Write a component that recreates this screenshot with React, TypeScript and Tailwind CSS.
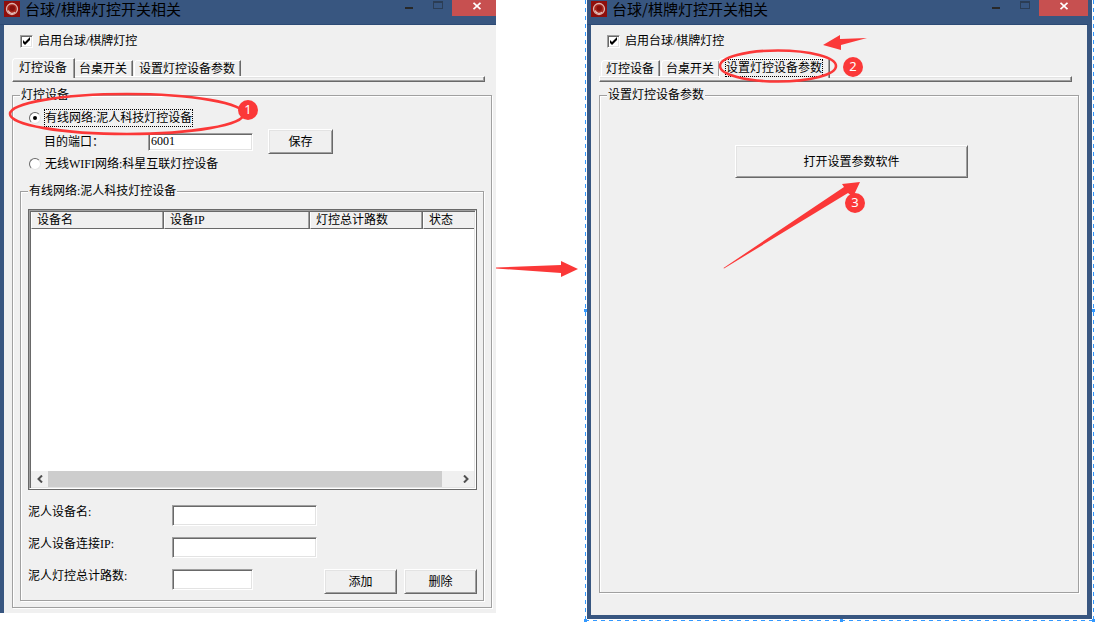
import type { ReactNode } from "react";
import clsx from "clsx";

const tabs = ["灯控设备", "台桌开关", "设置灯控设备参数"];

const columns = [
  { name: "设备名", width: "w-[30%]" },
  { name: "设备IP", width: "w-[33%]" },
  { name: "灯控总计路数", width: "w-[25.5%]" },
  { name: "状态", width: "w-[11.5%]" },
];

const sunken =
  "border border-t-[#a0a0a0] border-l-[#a0a0a0] border-r-white border-b-white shadow-[inset_1px_1px_0_#696969,inset_-1px_-1px_0_#e3e3e3]";

function AppIcon() {
  return (
    <svg viewBox="0 0 16 16" className="mt-px size-4 shrink-0">
      <rect width="16" height="16" fill="#8f0f0c" />
      <circle cx="8" cy="8" r="5.5" fill="#a8261c" stroke="#dfb3ad" strokeWidth="1.3" />
      <path d="M4.2 9.5a4 4 0 0 0 6.8 1.5" fill="none" stroke="#e8cbc6" strokeWidth="1.1" />
      <circle cx="8.3" cy="7.2" r="2.7" fill="#86100c" />
    </svg>
  );
}

function TitleBar({ closeClass }: { closeClass: string }) {
  return (
    <header className="flex h-[25px] items-start border-b border-[#2c4a75] bg-[#385680] pl-1">
      <AppIcon />
      <h1 className="ml-[5px] font-['Noto_Sans_CJK_SC',sans-serif] text-[15px] leading-[18px] whitespace-nowrap text-black">
        台球/棋牌灯控开关相关
      </h1>
      <div className="ml-auto flex h-4">
        <button aria-label="最小化" className="flex w-[29px] justify-center pt-[7px]">
          <span className="h-0.5 w-2 bg-[#282828]" />
        </button>
        <button aria-label="最大化" className="flex w-[29px] justify-center pt-px">
          <span className="h-2 w-2.5 border border-t-2 border-[#2b3d55]" />
        </button>
        <button aria-label="关闭" className={clsx("bg-[#c75050] pl-[21px]", closeClass)}>
          <svg viewBox="0 0 8 8" className="-mt-1 size-2">
            <path d="M.5.8 7.5 7.2M7.5.8.5 7.2" stroke="#fff" strokeWidth="1.8" />
          </svg>
        </button>
      </div>
    </header>
  );
}

function EnableCheck() {
  return (
    <label className="ml-2 flex h-4 w-fit items-center gap-[5px]">
      <span className="grid size-[13px]">
        <input
          type="checkbox"
          defaultChecked
          className={clsx("peer col-start-1 row-start-1 size-[13px] appearance-none bg-white", sunken)}
        />
        <svg
          viewBox="0 0 13 13"
          className="pointer-events-none invisible col-start-1 row-start-1 size-[13px] peer-checked:visible"
        >
          <path d="M3 5v3l2 2 5-5V2L5 7z" fill="#000" />
        </svg>
      </span>
      <span className="leading-4">启用台球/棋牌灯控</span>
    </label>
  );
}

function Tabs({ active, focused }: { active: number; focused?: boolean }) {
  return (
    <nav className="mt-[9px] mr-[7px]">
      <div role="tablist" className="flex h-[18px] items-end gap-px pl-0.5">
        {tabs.map((tab, i) => (
          <button
            key={tab}
            role="tab"
            aria-selected={i === active}
            className={clsx(
              "rounded-tl-sm border-t border-r border-l border-t-white border-r-[#696969] border-l-white bg-[#f0f0f0] leading-4 whitespace-nowrap shadow-[inset_-1px_0_0_#a0a0a0]",
              i === active ? "relative -mx-[2px] -mb-0.5 h-5 pr-[7px] pb-0.5 pl-[6px]" : "h-4 pr-[5px] pl-1"
            )}
          >
            <span className={clsx("block", i === active && focused && "outline-1 outline-black outline-dotted")}>
              {tab}
            </span>
          </button>
        ))}
      </div>
      <div className="h-[6px] border border-t-white border-r-[#696969] border-b-[#696969] border-l-white shadow-[inset_-1px_-1px_0_#a0a0a0,inset_0_1px_0_#e3e3e3]" />
    </nav>
  );
}

function Group({ title, className, children }: { title: string; className?: string; children: ReactNode }) {
  return (
    <fieldset
      className={clsx(
        "min-w-0 border border-[#a0a0a0] pl-[7px] shadow-[1px_1px_0_#fff,inset_1px_1px_0_#fff]",
        className
      )}
    >
      <legend className="h-4 bg-[#f0f0f0] px-px leading-4">{title}</legend>
      {children}
    </fieldset>
  );
}

function Button({ className, children }: { className?: string; children: ReactNode }) {
  return (
    <button
      className={clsx(
        "border border-t-white border-r-[#696969] border-b-[#696969] border-l-white bg-[#f0f0f0] shadow-[inset_1px_1px_0_#e3e3e3,inset_-1px_-1px_0_#a0a0a0]",
        className
      )}
    >
      {children}
    </button>
  );
}

function Radio({ label, checked }: { label: string; checked?: boolean }) {
  return (
    <label className="ml-[9px] flex h-4 w-fit items-center gap-1">
      <input
        type="radio"
        name="network"
        defaultChecked={checked}
        className="grid size-3 appearance-none place-items-center rounded-full border border-t-[#696969] border-r-[#e3e3e3] border-b-[#e3e3e3] border-l-[#696969] bg-white checked:before:size-1 checked:before:rounded-full checked:before:bg-black"
      />
      <span className={clsx("leading-4", checked && "outline-1 outline-black outline-dotted")}>{label}</span>
    </label>
  );
}

function Field({ id, label, inputClass, children }: { id: string; label: string; inputClass: string; children?: ReactNode }) {
  return (
    <div className="flex items-start">
      <label htmlFor={id} className="w-36 shrink-0 leading-[14px]">
        {label}
      </label>
      <input id={id} className={clsx("h-[21px] bg-white px-1", sunken, inputClass)} />
      {children}
    </div>
  );
}

function DeviceList() {
  return (
    <div className="mt-[10px] border border-[#696969]">
      <div className={clsx("flex h-[279px] flex-col bg-white p-px", sunken)}>
        <table className="w-full table-fixed border-separate border-spacing-0">
          <thead>
            <tr>
              {columns.map((col) => (
                <th
                  key={col.name}
                  className={clsx(
                    "h-4 border-r border-b border-l border-r-[#696969] border-b-[#696969] border-l-white bg-[#f0f0f0] p-0 pl-[5px] text-left leading-4 font-normal shadow-[inset_-1px_0_0_#a0a0a0] last:border-r-0 last:shadow-none",
                    col.width
                  )}
                >
                  {col.name}
                </th>
              ))}
            </tr>
          </thead>
          <tbody />
        </table>
        <div className="mt-auto flex h-4 items-center bg-[#f0f0f0] text-[#505050]">
          <button aria-label="向左" className="flex w-[17px] justify-center">
            <svg viewBox="0 0 6 8" className="h-2 w-1.5">
              <path d="M5 .5 1.5 4 5 7.5" fill="none" stroke="currentColor" strokeWidth="2" />
            </svg>
          </button>
          <div className="mr-[15px] h-full flex-1 bg-[#cdcdcd]" />
          <button aria-label="向右" className="flex w-[17px] justify-center">
            <svg viewBox="0 0 6 8" className="h-2 w-1.5">
              <path d="M1 .5 4.5 4 1 7.5" fill="none" stroke="currentColor" strokeWidth="2" />
            </svg>
          </button>
        </div>
      </div>
    </div>
  );
}

function Badge({ className, children }: { className: string; children: ReactNode }) {
  return (
    <span
      className={clsx(
        "pointer-events-none absolute size-5 rounded-full bg-[#fb3838] text-center font-['Noto_Sans',sans-serif] text-[13px] leading-[19px] text-white",
        className
      )}
    >
      {children}
    </span>
  );
}

function DeviceWindow() {
  return (
    <section className="relative bg-[#385680] pl-1">
      <div className="-ml-1">
        <TitleBar closeClass="w-[44px]" />
      </div>
      <div className="bg-[#f0f0f0] pt-2 pr-1 pb-[5px] pl-2">
        <EnableCheck />
        <Tabs active={0} />
        <Group title="灯控设备" className="mt-[5px] pr-[7px] pb-[6px]">
          <div className="mt-[7px]">
            <Radio label="有线网络:泥人科技灯控设备" checked />
          </div>
          <div className="mt-[3px] flex h-[25px] items-center pl-6">
            <label htmlFor="port" className="w-[104px]">
              目的端口：
            </label>
            <input
              id="port"
              defaultValue="6001"
              className={clsx("h-[18px] w-[105px] bg-white px-0.5", sunken)}
            />
            <Button className="ml-[15px] h-[25px] w-[65px]">保存</Button>
          </div>
          <div className="mt-0.5">
            <Radio label="无线WIFI网络:科星互联灯控设备" />
          </div>
          <Group title="有线网络:泥人科技灯控设备" className="mt-[11px] pr-[6px] pb-[6px]">
            <DeviceList />
            <div className="mt-[15px] flex flex-col gap-[11px]">
              <Field id="name" label="泥人设备名:" inputClass="w-[145px]" />
              <Field id="ip" label="泥人设备连接IP:" inputClass="w-[145px]" />
              <Field id="ways" label="泥人灯控总计路数:" inputClass="w-[81px]">
                <div className="ml-auto flex gap-[7px]">
                  <Button className="h-[25px] w-[73px]">添加</Button>
                  <Button className="h-[25px] w-[73px]">删除</Button>
                </div>
              </Field>
            </div>
          </Group>
        </Group>
      </div>
      <svg width="260" height="150" className="pointer-events-none absolute top-0 left-0">
        <ellipse cx="127" cy="114" rx="117" ry="20" fill="none" stroke="#fb3838" strokeWidth="2.6" />
      </svg>
      <Badge className="top-[100px] left-[238px]">1</Badge>
    </section>
  );
}

function ParamWindow() {
  return (
    <section className="bg-[#385680] pb-1">
      <div className="pr-1">
        <TitleBar closeClass="w-[49px]" />
      </div>
      <div className="mr-[5px] ml-1 bg-[#f0f0f0] pt-2 pr-2 pb-[22px] pl-2">
        <EnableCheck />
        <Tabs active={2} focused />
        <Group title="设置灯控设备参数" className="mt-[5px] h-[506px]">
          <Button className="mt-[42px] ml-32 h-[33px] w-[233px]">打开设置参数软件</Button>
        </Group>
      </div>
    </section>
  );
}

const handles = [
  "top-[309px] -left-px",
  "top-[309px] -right-px",
  "-bottom-px -left-px",
  "-bottom-px left-1/2",
  "-right-px -bottom-px",
];

// dashed frame with drag handles round the selected window
function Selection({ children }: { children: ReactNode }) {
  return (
    <div className="relative px-0.5 pb-0.5">
      {children}
      <span className="absolute inset-y-0 left-0 w-px bg-[repeating-linear-gradient(to_bottom,#3399ff_0_4px,transparent_4px_8px)]" />
      <span className="absolute inset-y-0 right-0 w-px bg-[repeating-linear-gradient(to_bottom,#3399ff_0_4px,transparent_4px_8px)]" />
      <span className="absolute inset-x-0 bottom-0 h-px bg-[repeating-linear-gradient(to_right,#3399ff_0_4px,transparent_4px_8px)]" />
      {handles.map((pos) => (
        <span key={pos} className={clsx("absolute size-[3px] bg-[#3399ff]", pos)} />
      ))}
      <svg width="300" height="280" className="pointer-events-none absolute top-0 left-0" fill="#fb3838">
        <ellipse cx="193" cy="66" rx="58" ry="15.5" fill="none" stroke="#fb3838" strokeWidth="2.6" />
        <path d="M238 45 255 35v4l27-1-26 7v5z" />
        <path d="M138.500 268 259 187l-2-3 18-2-7 15-5-4-124 75.500z" />
      </svg>
      <Badge className="top-[57px] left-[258px]">2</Badge>
      <Badge className="top-[193px] left-[260px]">3</Badge>
    </div>
  );
}

export default function App() {
  return (
    <main className="grid min-h-screen grid-cols-[496fr_89fr_509fr] items-start bg-white pr-1 font-['Liberation_Serif','Noto_Sans_CJK_SC',serif] text-xs text-black">
      <DeviceWindow />
      <svg viewBox="0 0 89 20" className="mt-[259px] w-full" fill="#fb3838">
        <path d="M0 8.500 65 6V2l17 8-17 8v-4L0 9.500z" />
      </svg>
      <Selection>
        <ParamWindow />
      </Selection>
    </main>
  );
}
